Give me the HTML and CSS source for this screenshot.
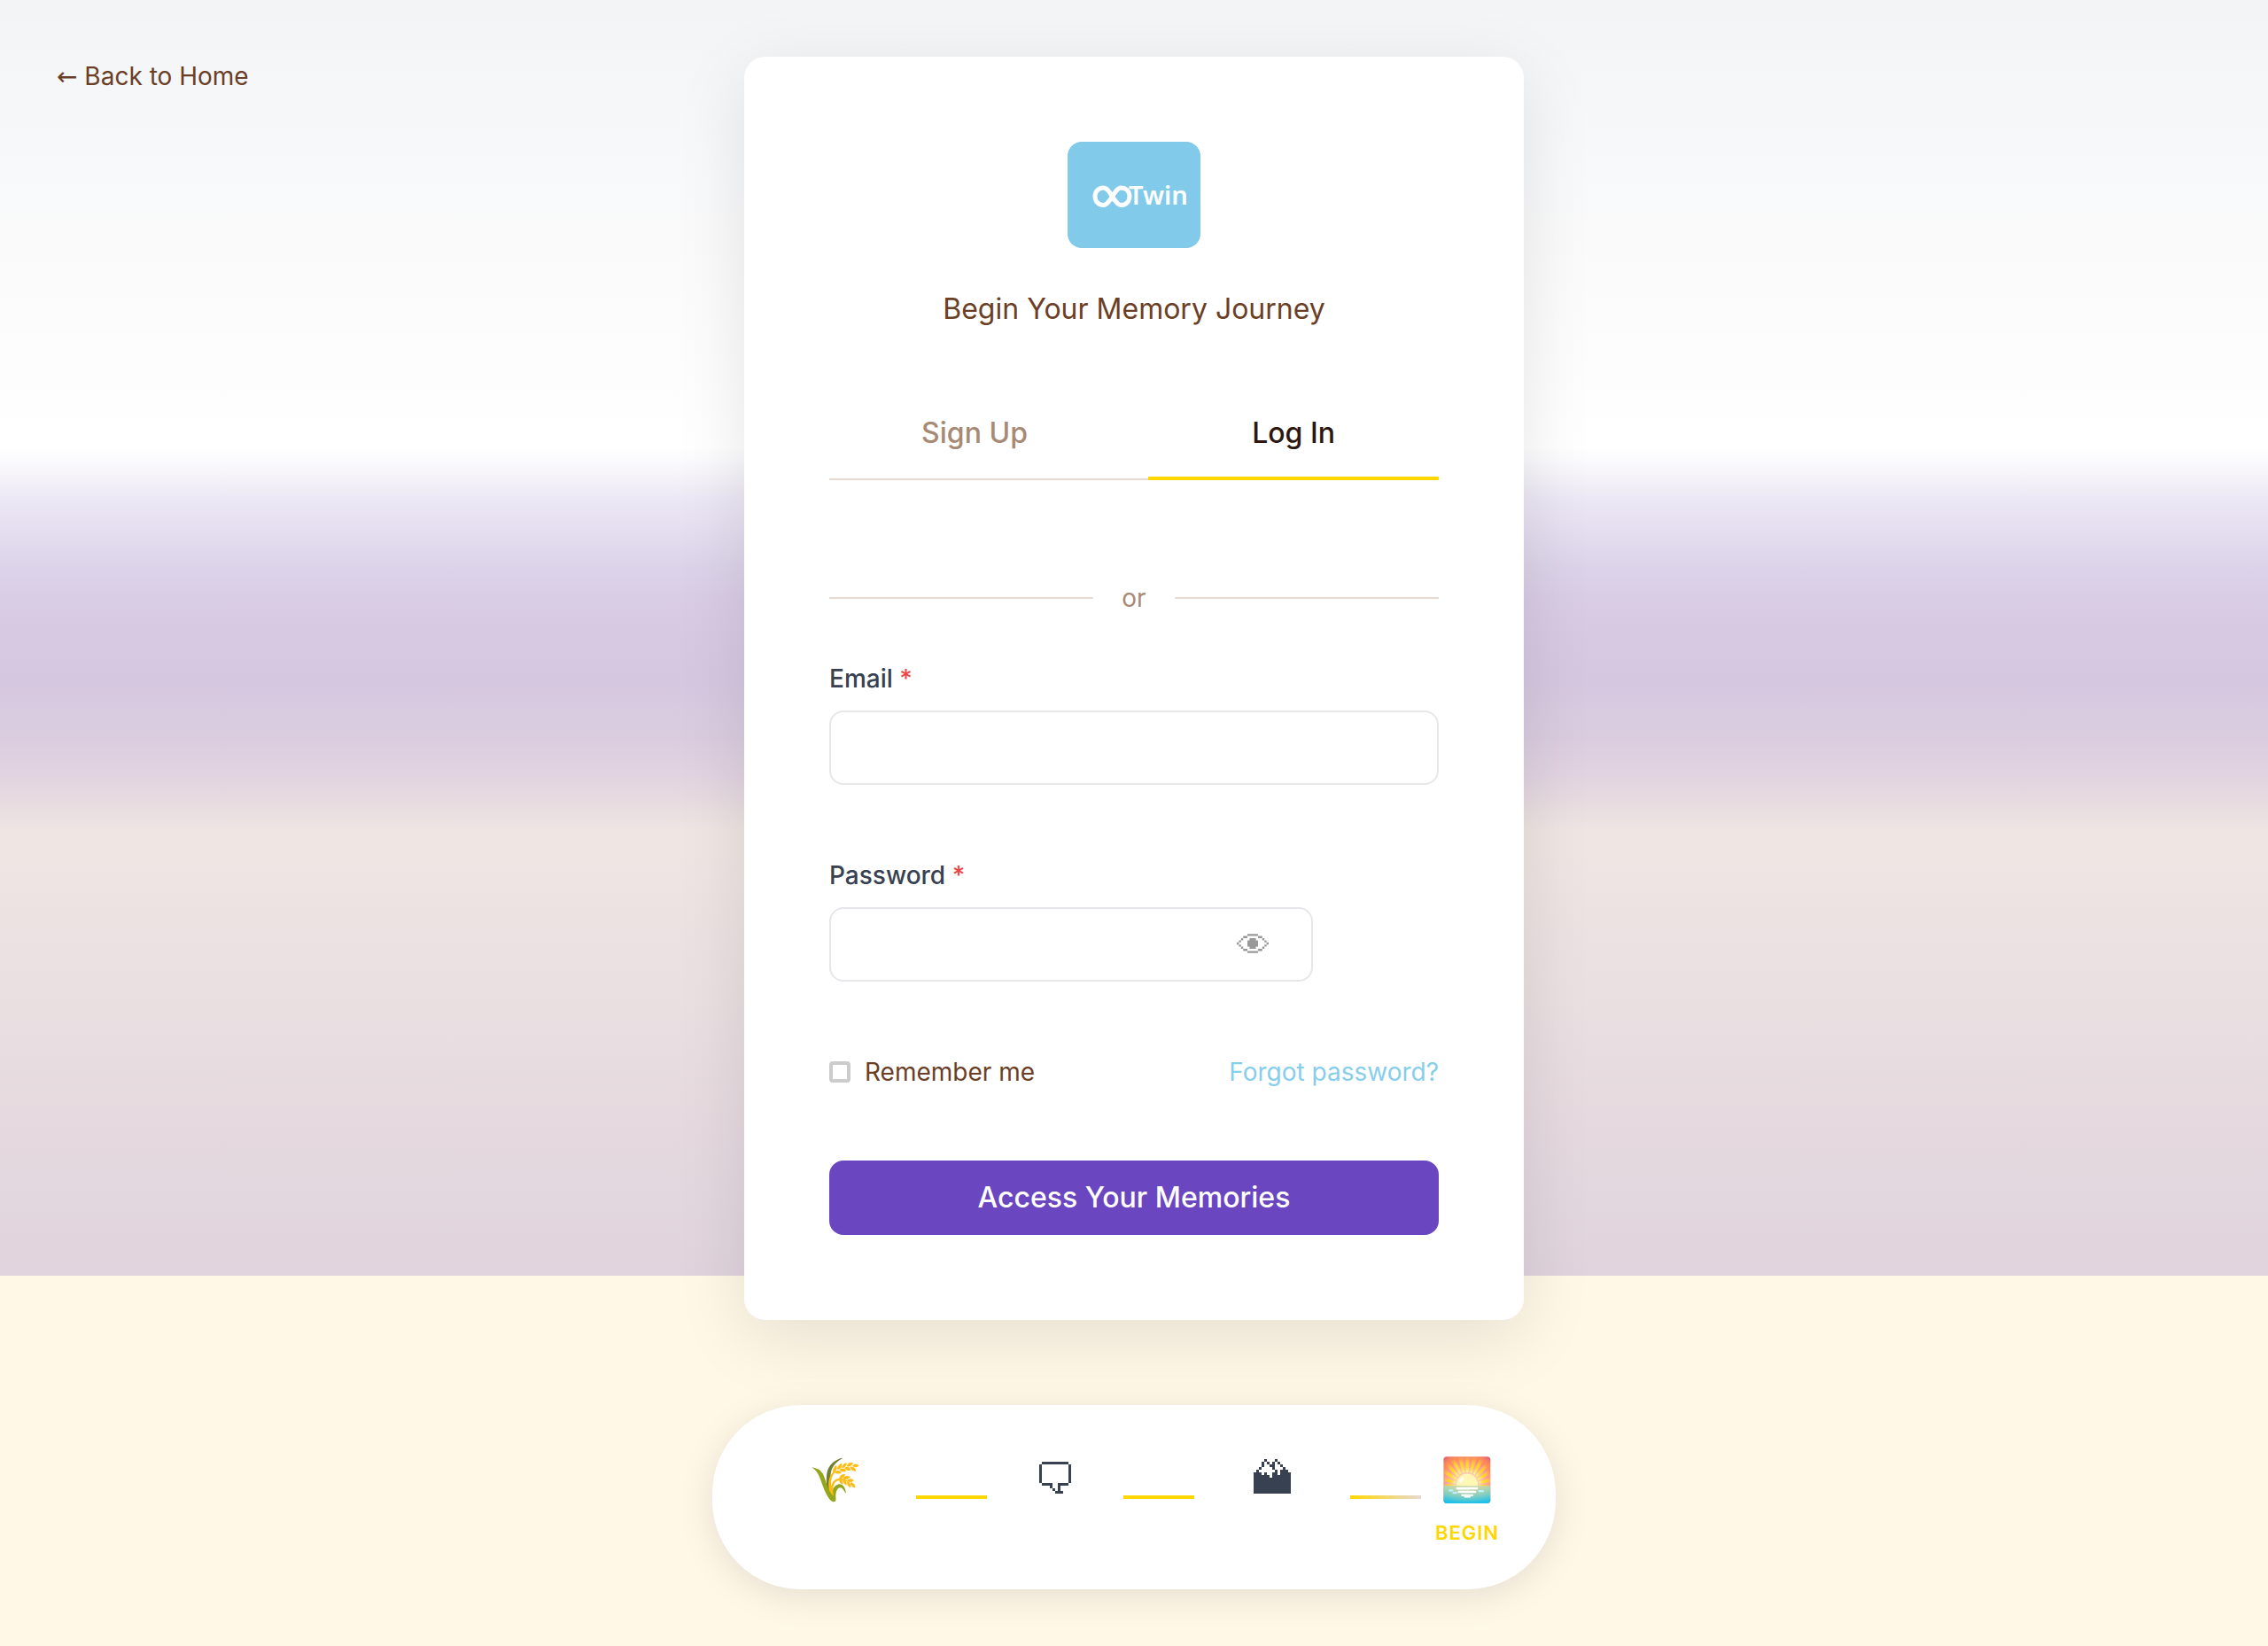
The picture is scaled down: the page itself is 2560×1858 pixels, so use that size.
FILE: index.html
```html
<!DOCTYPE html>
<html lang="en">
<head>
<meta charset="utf-8">
<meta name="viewport" content="width=device-width, initial-scale=1">
<title>Log In</title>
<link rel="stylesheet" href="styles.css">
</head>
<body>
<div class="page">
  <nav class="page-nav"><a class="back-link" href="#"><span class="arrow">←</span> Back to Home</a></nav>

  <main class="card">
    <svg class="logo" viewBox="0 0 150 120" role="img" aria-label="Twin">
      <path class="logo-loop" d="M50.500 61.800C47.500 57 44.500 52 40.500 52C35 52 31 56.300 31 61.800C31 67.200 35 71.500 40.500 71.500C44.500 71.500 47.500 66.500 50.500 61.800C53.500 57 56.500 52 60.500 52C66 52 70 56.300 70 61.800C70 67.200 66 71.500 60.500 71.500C56.500 71.500 53.500 66.500 50.500 61.800Z"/>
      <text class="logo-text" x="69" y="71">Twin</text>
    </svg>
    <h1 class="title">Begin Your Memory Journey</h1>

    <div class="tabs">
      <button class="tab" type="button">Sign Up</button>
      <button class="tab tab-active" type="button">Log In</button>
    </div>

    <div class="divider">or</div>

    <form class="form">
      <div class="field">
        <label class="label" for="email">Email <span class="required">*</span></label>
        <input class="input" id="email" type="email">
      </div>
      <div class="field">
        <label class="label" for="password">Password <span class="required">*</span></label>
        <div class="password">
          <input class="input" id="password" type="password">
          <button class="eye" type="button" aria-label="Show password">
            <svg viewBox="0 0 15 9" width="36" height="22">
              <path d="M5 0h5v1H5zM3 1h2v1H3zM10 1h2v1h-2zM2 2h1v1H2zM12 2h1v1h-1zM1 3h1v1H1zM13 3h1v1h-1zM0 4h1v1H0zM14 4h1v1h-1zM1 5h1v1H1zM13 5h1v1h-1zM2 6h1v1H2zM12 6h1v1h-1zM3 7h2v1H3zM10 7h2v1h-2zM5 8h5v1H5zM6 2h3v1H6zM5 3h5v3H5zM6 6h3v1H6z"/>
            </svg>
          </button>
        </div>
      </div>
      <div class="options">
        <label class="remember"><input class="checkbox" type="checkbox">Remember me</label>
        <a class="forgot" href="#">Forgot password?</a>
      </div>
      <button class="submit" type="submit">Access Your Memories</button>
    </form>
  </main>

  <div class="journey">
    <div class="step"><span class="emoji">🌾</span></div>
    <span class="link-line"></span>
    <div class="step">
      <div class="glyph">
        <svg viewBox="0 0 12 12" width="36" height="36" shape-rendering="crispEdges">
          <path d="M1 0h10v1H1zM0 1h1v7H0zM11 1h1v7h-1zM1 8h4v1H1zM7 8h4v1H7zM4 9h1v1H4zM7 9h1v2H7zM5 10h1v1H5zM6 11h3v1H6z"/>
        </svg>
      </div>
    </div>
    <span class="link-line"></span>
    <div class="step">
      <div class="glyph">
        <svg viewBox="0 0 14 13" width="42" height="39" shape-rendering="crispEdges">
          <path d="M4 0h1v1H4zM8 0h1v1H8zM3 1h1v2H3zM5 1h1v1H5zM7 1h1v1H7zM9 1h1v1H9zM6 2h2v1H6zM10 2h1v1h-1zM2 3h1v1H2zM7 3h1v1H7zM11 3h1v1h-1zM1 4h1v1H1zM8 4h1v1H8zM10 4h3v1h-3zM0 5h3v1H0zM4 5h1v1H4zM7 5h2v1H7zM10 5h4v1h-4zM0 6h6v1H0zM7 6h7v1H7zM0 7h14v6H0z"/>
        </svg>
      </div>
    </div>
    <span class="link-line link-line-fade"></span>
    <div class="step"><span class="emoji">🌅</span><span class="step-label">BEGIN</span></div>
  </div>
</div>
</body>
</html>
```
FILE: styles.css
```css
* {
  box-sizing: border-box;
}

body {
  margin: 0;
  background: #fff8e7;
  font-family: Inter, "Liberation Sans", sans-serif;
  font-size: 28px;
  line-height: 44px;
  color: #6b3e26;
}

button,
input {
  font: inherit;
}

button {
  border: 0;
  background: none;
  padding: 0;
  cursor: pointer;
}

a {
  text-decoration: none;
}

.page {
  display: grid;
  grid-template-columns: 1fr minmax(0, 880px) 1fr;
  row-gap: 96px;
  padding: 64px;
  background: linear-gradient(
    #f3f4f6 0, #f8f9fb 200px, #fafafa 270px, #fdfdfd 420px, #fff 505px,
    #f5f3f9 538px, #ece8f5 562px, #e4ddef 602px, #dcd3e9 640px,
    #d9cce5 676px, #d7c9e2 715px, #d6c7e0 770px, #d8cae0 800px,
    #dbcddf 835px, #e1d3e1 874px, #e7dbe0 904px, #efe5e2 938px,
    #efe5e3 960px, #e0d3dd 1440px) no-repeat top / 100% 1440px;
}

.back-link {
  color: #6b3e26;
}

.arrow {
  font-family: "DejaVu Sans", sans-serif;
  line-height: 1;
}

.card {
  padding: 96px;
  border-radius: 24px;
  background: #fff;
  box-shadow: 0 20px 80px rgba(0, 0, 0, 0.1);
}

.logo {
  display: block;
  width: 150px;
  height: 120px;
  margin: 0 auto 45px;
  border-radius: 16px;
  background: #82caea;
}

.logo-loop {
  fill: none;
  stroke: #fff;
  stroke-width: 5;
}

.logo-text {
  fill: #fff;
  font: 600 29px "Noto Sans", sans-serif;
}

.title {
  margin: 0 0 79px;
  font-size: 32px;
  line-height: 48px;
  font-weight: 400;
  text-align: center;
}

.tabs {
  display: flex;
  gap: 32px;
  box-shadow: inset 0 -2px #e6dad2;
}

.tab {
  flex: 1;
  padding: 12px 0 24px;
  border-bottom: 4px solid transparent;
  font-size: 32px;
  line-height: 50px;
  font-weight: 500;
  color: #a68a75;
}

.tab-active {
  border-color: #ffd700;
  color: #2c1810;
}

.divider {
  display: flex;
  align-items: center;
  gap: 32px;
  margin: 111px 0 47px;
  color: #a68a75;
}

.divider::before,
.divider::after {
  content: "";
  flex: 1;
  height: 2px;
  background: #e6dad2;
}

.field {
  margin-bottom: 80px;
}

.label {
  display: block;
  margin-bottom: 14px;
  font-weight: 500;
  color: #374151;
}

.required {
  color: #ef4444;
}

.input {
  display: block;
  width: 100%;
  height: 84px;
  padding: 0 32px;
  border: 2px solid #e5e7eb;
  border-radius: 16px;
  background: #fff;
}

.password {
  position: relative;
  width: 546px;
  max-width: 100%;
}

.eye {
  position: absolute;
  top: 30px;
  right: 50px;
  height: 22px;
  line-height: 0;
  fill: #999;
}

.options {
  display: flex;
  justify-content: space-between;
  margin-bottom: 78px;
}

.remember {
  display: flex;
  align-items: center;
  gap: 16px;
}

.checkbox {
  appearance: none;
  width: 24px;
  height: 24px;
  margin: 0;
  border: 4px solid #ccc;
  border-radius: 4px;
}

.forgot {
  color: #87ceeb;
}

.submit {
  display: block;
  width: 100%;
  height: 84px;
  border-radius: 16px;
  background: #6b46c1;
  color: #fff;
  font-size: 32px;
  font-weight: 500;
}

.journey {
  grid-column: 1 / -1;
  justify-self: center;
  display: grid;
  grid-template-columns: 150px 80px 122px 80px 144px 80px 72px;
  gap: 16px;
  align-items: center;
  padding: 48px 64px;
  border-radius: 100px;
  background: #fff;
  box-shadow: 0 8px 40px rgba(0, 0, 0, 0.1);
}

.step {
  display: flex;
  flex-direction: column;
  align-items: center;
  gap: 8px;
  height: 112px;
}

.emoji {
  font-size: 48px;
  line-height: 72px;
}

.glyph {
  display: flex;
  align-items: flex-end;
  height: 52px;
  fill: #374151;
}

.link-line {
  height: 4px;
  background: #ffd700;
}

.link-line-fade {
  background: linear-gradient(90deg, #ffd700, #e6dad2);
}

.step-label {
  font-size: 22px;
  line-height: 32px;
  font-weight: 600;
  letter-spacing: 1px;
  color: #ffd700;
}
```
